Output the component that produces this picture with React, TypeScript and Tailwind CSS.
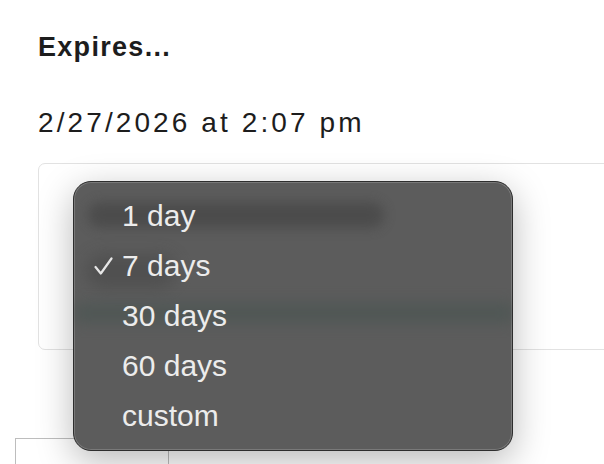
import React from 'react';

const options = ['1 day', '7 days', '30 days', '60 days', 'custom'];

function Check() {
  return (
    <svg width="19" height="19" viewBox="0 0 19 19" fill="none" className="text-[#e6e6e6]">
      <path d="M1.5 10 L6.8 16.5 L17.5 1.5" stroke="currentColor" strokeWidth="2.2" strokeLinecap="round" strokeLinejoin="round" />
    </svg>
  );
}

const ExpiryMenu: React.FC<{ selected: string }> = ({ selected }) => {
  return (
    <div className="absolute left-[73px] top-[181px] w-[440px] h-[270px] rounded-[18px] bg-[#5c5c5c] border border-[#2e2e2e] shadow-[0_10px_36px_rgba(0,0,0,0.28),inset_0_0_0_1px_rgba(255,255,255,0.18)] overflow-hidden">
      {/* vibrancy: blurred content from underneath */}
      <div className="absolute left-[14px] top-[20px] w-[296px] h-[26px] rounded-full bg-[#454545] blur-[6px] opacity-70" />
      <div className="absolute left-[12px] top-[72px] w-[90px] h-[34px] rounded-full bg-[#484848] blur-[8px] opacity-60" />
      <div className="absolute left-0 top-[122px] w-[440px] h-[18px] bg-[#4a5552] blur-[8px] opacity-80" />
      <div className="relative flex flex-col pt-[9px]">
        {options.map((o) => (
          <div key={o} className="h-[50px] flex items-center">
            <div className="w-[48px] flex justify-end pr-[9px]">
              {o === selected && <Check />}
            </div>
            <span className="text-[30px] text-[#ececec] leading-none">{o}</span>
          </div>
        ))}
      </div>
    </div>
  );
};

export default function App() {
  return (
    <div className="relative w-[604px] h-[464px] overflow-hidden bg-white text-[#1d1d1d] font-['Liberation_Sans',Arial,sans-serif]">
      <div className="flex flex-col pt-[31px]">
        <div className="flex flex-col gap-[44px] pl-[38px]">
          <h2 className="text-[27px] leading-[32px] font-bold tracking-[1.3px]">Expires...</h2>
          <p className="text-[28px] leading-[32px] tracking-[3.1px]">2/27/2026 at 2:07 pm</p>
        </div>
        <div className="flex flex-col gap-[88px] pt-[24px]">
          <div className="ml-[38px] w-[620px] h-[187px] rounded-[7px] border border-[#e2e2e2] bg-white" />
          <div className="ml-[15px] w-[154px] h-[40px] border border-[#bdbdbd]" />
        </div>
      </div>
      <ExpiryMenu selected="7 days" />
    </div>
  );
}
